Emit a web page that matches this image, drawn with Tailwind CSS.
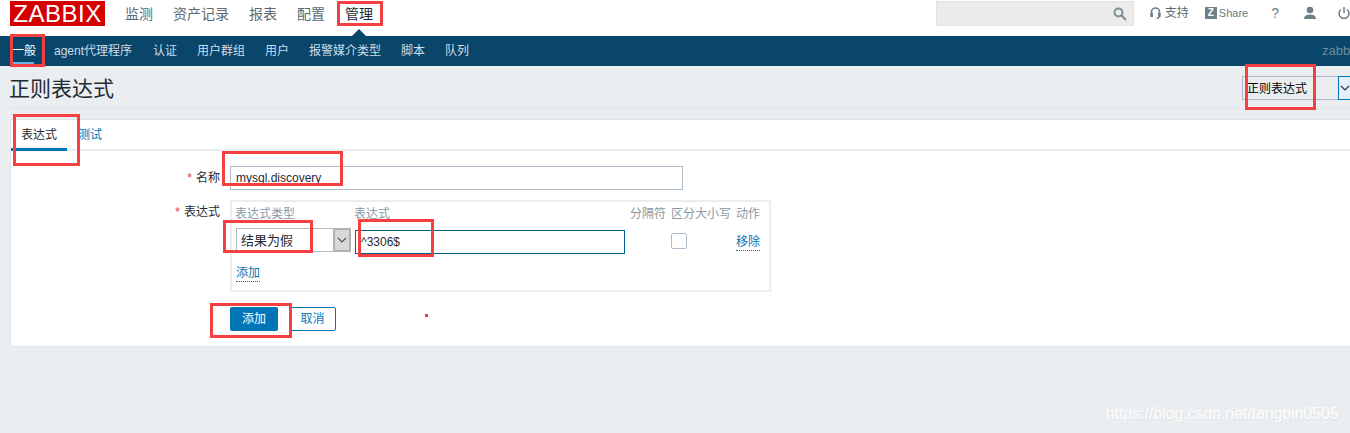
<!DOCTYPE html>
<html lang="zh-CN">
<head>
  <meta charset="UTF-8">
  <title>正则表达式</title>
  <script src="https://cdn.jsdelivr.net/npm/@tailwindcss/browser@4"></script>
</head>
<body class="relative w-[1350px] h-[433px] overflow-hidden bg-[#ebeef0] text-[#1f2c33] text-xs font-['Liberation_Sans','Noto_Sans_CJK_SC',sans-serif]">

  <!-- top nav -->
  <header class="relative flex items-start h-9 bg-white pl-[10px]">
    <div class="w-[95px] h-[25px] mt-px bg-[#d40000] text-white text-[24px] leading-[25px] tracking-[0.5px] text-center">ZABBIX</div>
    <nav class="flex gap-5 ml-5 mt-[6px] text-sm leading-4 text-[#5d6a72]">
      <a>监测</a>
      <a>资产记录</a>
      <a>报表</a>
      <a>配置</a>
      <a class="text-[#1f2c33]">管理</a>
    </nav>
    <div class="absolute left-[352px] top-[29px] border-x-[7px] border-b-[7px] border-x-transparent border-b-[#0a466a]"></div>
    <div class="flex items-start ml-auto">
      <div class="flex items-center justify-end w-[198px] h-[25px] mt-px pr-[6px] bg-[#ebebeb] border border-[#e3e3e3]">
        <svg class="w-[14px] h-[14px]" viewBox="0 0 14 14" fill="none" stroke="#7b8a93" stroke-width="2"><circle cx="5.5" cy="5.5" r="4"/><path d="M8.5 8.5 13 13"/></svg>
      </div>
      <div class="flex items-center gap-[4px] ml-[16px] mt-[5px] text-[#5d6a72] leading-4 w-[37px]">
        <svg class="w-[11px] h-3 shrink-0" viewBox="0 0 11 12" fill="none" stroke="#6f7f88" stroke-width="1.6"><path d="M1.500 7V5a4 4 0 0 1 8 0v2"/><rect x="0.300" y="6" width="2.600" height="4" fill="#6f7f88" stroke="none"/><rect x="8.100" y="6" width="2.600" height="4" fill="#6f7f88" stroke="none"/><path d="M9 10c0 1-1 1.300-2.500 1.300"/></svg>
        <span class="whitespace-nowrap">支持</span>
      </div>
      <div class="flex items-center gap-[2px] ml-[18px] mt-[5px] text-[#6b7a83] text-[11px] leading-4">
        <span class="flex items-center justify-center w-3 h-3 bg-[#6f7f88] text-white text-[10px] leading-3 font-bold">Z</span>
        <span>Share</span>
      </div>
      <span class="ml-[23px] mt-[5px] text-[#6f7f88] text-sm leading-4">?</span>
      <svg class="ml-[24px] mt-[6px] w-[14px] h-[14px]" viewBox="0 0 14 14" fill="#6f7f88"><circle cx="7" cy="4" r="3.300"/><path d="M1 13c0-3.500 3-4.500 6-4.500s6 1 6 4.500z"/></svg>
      <svg class="ml-[21px] mt-[6px] w-3 h-[14px] shrink-0" viewBox="0 0 12 14" fill="none" stroke="#6f7f88" stroke-width="1.500"><path d="M6 1v6"/><path d="M3 3.500a5 5 0 1 0 6 0"/></svg>
    </div>
  </header>

  <!-- sub nav -->
  <nav class="flex items-start gap-5 h-[30px] pl-3 bg-[#0a466a] text-[#cfdde6] leading-[30px]">
    <a class="h-[30px] w-[22px] text-white border-b-[4px] border-[#6fb4e6] whitespace-nowrap">一般</a>
    <a class="w-[79px] whitespace-nowrap">agent代理程序</a>
    <a>认证</a>
    <a>用户群组</a>
    <a>用户</a>
    <a>报警媒介类型</a>
    <a>脚本</a>
    <a>队列</a>
    <span class="ml-auto w-[28px] overflow-hidden text-[#6d8da1] text-[13px]">zabbix</span>
  </nav>

  <!-- title row -->
  <div class="flex items-center justify-between h-[43px] ml-[10px] pt-[3px] border-b border-[#dfe4e7]">
    <h1 class="-ml-px text-[21px] leading-6 font-normal text-[#1f2c33]">正则表达式</h1>
    <div class="flex w-[108px] h-6 mb-px bg-[#ebeef0] border border-[#acbbc7] border-r-0">
      <span class="flex-1 pl-1 text-[12px] leading-6 text-[#000]">正则表达式</span>
      <span class="flex items-center justify-center w-3 -my-px h-6 bg-[#e3f0fb] border border-[#0275b8] border-r-0">
        <svg class="w-[10px] h-[6px] ml-px shrink-0" viewBox="0 0 10 6" fill="none" stroke="#333" stroke-width="1.200"><path d="M1 1l4 4 4-4"/></svg>
      </span>
    </div>
  </div>

  <!-- card -->
  <main class="h-[228px] mt-[10px] ml-[10px] bg-white border border-r-0 border-[#dfe4e7]">
    <div class="flex items-start h-[31px] border-b-2 border-[#ebeef0]">
      <a class="w-[56px] h-[31px] pl-[10px] leading-[30px] border-b-[3px] border-[#0275b8]">表达式</a>
      <a class="ml-[11px] leading-[30px] text-[#0275b8]">测试</a>
    </div>

    <div class="grid grid-cols-[209px_1fr] gap-x-[10px] pt-[15px]">
      <label class="text-right leading-6"><span class="text-[#e33734] mr-1">*</span>名称</label>
      <div class="w-[453px] h-6 pl-[5px] border border-[#acbbc7] leading-[22px] text-[#1f2c33]">mysql.discovery</div>

      <label class="mt-[10px] text-right leading-6"><span class="text-[#e33734] mr-1">*</span>表达式</label>
      <div class="w-[541px] h-[92px] mt-[10px] pl-1 pt-[4px] border-2 border-[#ebeef0]">
        <div class="grid grid-cols-[119px_276px_41px_65px_24px] text-[#8a9aa3] leading-[16px] -ml-px">
          <span class="whitespace-nowrap">表达式类型</span>
          <span>表达式</span>
          <span class="whitespace-nowrap">分隔符</span>
          <span class="whitespace-nowrap">区分大小写</span>
          <span class="whitespace-nowrap">动作</span>
        </div>
        <div class="grid grid-cols-[119px_276px_41px_65px_24px] items-start mt-[6px] -ml-px">
          <div class="flex w-[115px] h-6 ml-px border border-[#acbbc7]">
            <span class="flex-1 pl-1 leading-[24px] text-[13px] text-[#1f2c33]">结果为假</span>
            <span class="flex items-center justify-center w-[18px] h-6 -my-px -mr-px bg-[#d8d8d8] border-2 border-[#acb4b8]">
              <svg class="w-[10px] h-[6px]" viewBox="0 0 10 6" fill="none" stroke="#555" stroke-width="1.200"><path d="M1 1l4 4 4-4"/></svg>
            </span>
          </div>
          <div class="w-[270px] h-6 mt-[2px] ml-px pl-[5px] border border-[#00608f] leading-[22px]">^3306$</div>
          <span></span>
          <span class="block w-4 h-4 mt-[5px] bg-white border border-[#acbbc7] rounded-[2px]"></span>
          <a class="mt-[6px] h-[17px] leading-4 text-[#0275b8] border-b border-dotted border-[#0275b8] whitespace-nowrap">移除</a>
        </div>
        <a class="inline-block mt-[11px] leading-4 text-[#0275b8] border-b border-dotted border-[#0275b8]">添加</a>
      </div>

      <div class="col-start-2 flex gap-[11px] mt-[15px]">
        <button class="w-[48px] h-6 bg-[#0275b8] text-white rounded-[2px]">添加</button>
        <button class="w-[47px] h-6 bg-white border border-[#0275b8] text-[#0275b8] rounded-[2px]">取消</button>
      </div>
    </div>
  </main>

  <!-- red marks drawn over the screenshot -->
  <div class="absolute left-[337px] top-px w-[46px] h-[25px] border-[3px] border-[#f44040]"></div>
  <div class="absolute left-[10px] top-[34px] w-[35px] h-[33px] border-[3px] border-[#f44040]"></div>
  <div class="absolute left-[1245px] top-[64px] w-[71px] h-[46px] border-[3px] border-[#f44040]"></div>
  <div class="absolute left-[13px] top-[114px] w-[67px] h-[52px] border-[3px] border-[#f44040]"></div>
  <div class="absolute left-[222px] top-[151px] w-[121px] h-[35px] border-[3px] border-[#f44040]"></div>
  <div class="absolute left-[223px] top-[220px] w-[90px] h-[33px] border-[3px] border-[#f44040]"></div>
  <div class="absolute left-[358px] top-[219px] w-[76px] h-[38px] border-[3px] border-[#f44040]"></div>
  <div class="absolute left-[210px] top-[303px] w-[82px] h-[35px] border-[3px] border-[#f44040]"></div>
  <div class="absolute left-[425px] top-[314px] w-[3px] h-[3px] bg-[#f44040]"></div>

  <!-- watermark -->
  <div class="absolute left-[1106px] top-[404px] text-[15.800px] leading-5 text-white/90 [text-shadow:1px_1px_1px_#e0e3e5]">https://blog.csdn.net/tangbin0505</div>
</body>
</html>
